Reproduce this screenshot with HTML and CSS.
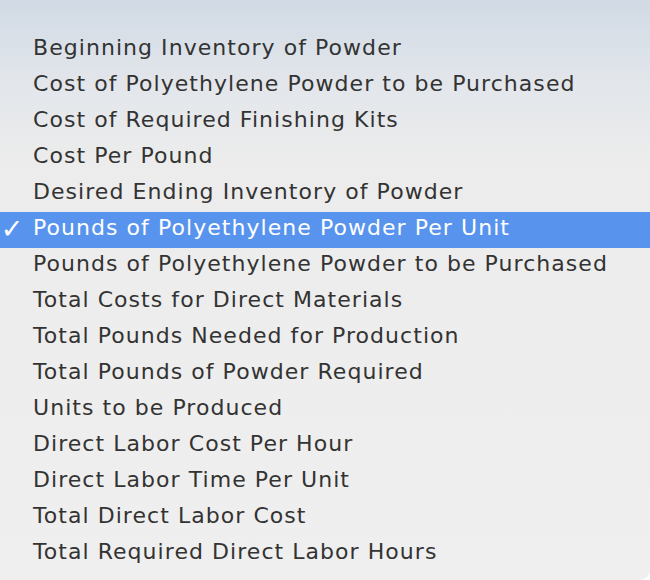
FILE: index.html
```html
<!DOCTYPE html>
<html>
<head>
<meta charset="utf-8">
<link rel="stylesheet" href="styles.css">
</head>
<body>
<div class="menu">
  <ul class="list">
    <li class="item">Beginning Inventory of Powder</li>
    <li class="item">Cost of Polyethylene Powder to be Purchased</li>
    <li class="item">Cost of Required Finishing Kits</li>
    <li class="item">Cost Per Pound</li>
    <li class="item">Desired Ending Inventory of Powder</li>
    <li class="item selected"><span class="check">✓</span>Pounds of Polyethylene Powder Per Unit</li>
    <li class="item">Pounds of Polyethylene Powder to be Purchased</li>
    <li class="item">Total Costs for Direct Materials</li>
    <li class="item">Total Pounds Needed for Production</li>
    <li class="item">Total Pounds of Powder Required</li>
    <li class="item">Units to be Produced</li>
    <li class="item">Direct Labor Cost Per Hour</li>
    <li class="item">Direct Labor Time Per Unit</li>
    <li class="item">Total Direct Labor Cost</li>
    <li class="item">Total Required Direct Labor Hours</li>
  </ul>
</div>
</body>
</html>
```

FILE: styles.css
```css
html, body {
  margin: 0;
  padding: 0;
  width: 650px;
  height: 580px;
  overflow: hidden;
}
.menu {
  width: 650px;
  height: 580px;
  box-sizing: border-box;
  padding-top: 30px;
  background: linear-gradient(to bottom, #d1dae5 0px, #e2e6eb 80px, #ececec 160px, #efefef 580px);
  border-bottom-right-radius: 10px;
  font-family: "DejaVu Sans", Verdana, sans-serif;
}
.list {
  list-style: none;
  margin: 0;
  padding: 0;
}
.item {
  position: relative;
  height: 36px;
  line-height: 36px;
  padding-left: 33px;
  font-size: 22px;
  letter-spacing: 1.05px;
  color: #333333;
  white-space: nowrap;
}
.item.selected {
  background: #5894ee;
  color: #ffffff;
  margin-top: 2px;
  margin-bottom: -2px;
  line-height: 32px;
}
.check {
  position: absolute;
  left: 0;
  top: 0;
  width: 24px;
  text-align: center;
  font-size: 27px;
  line-height: 34px;
  letter-spacing: 0;
}
```
